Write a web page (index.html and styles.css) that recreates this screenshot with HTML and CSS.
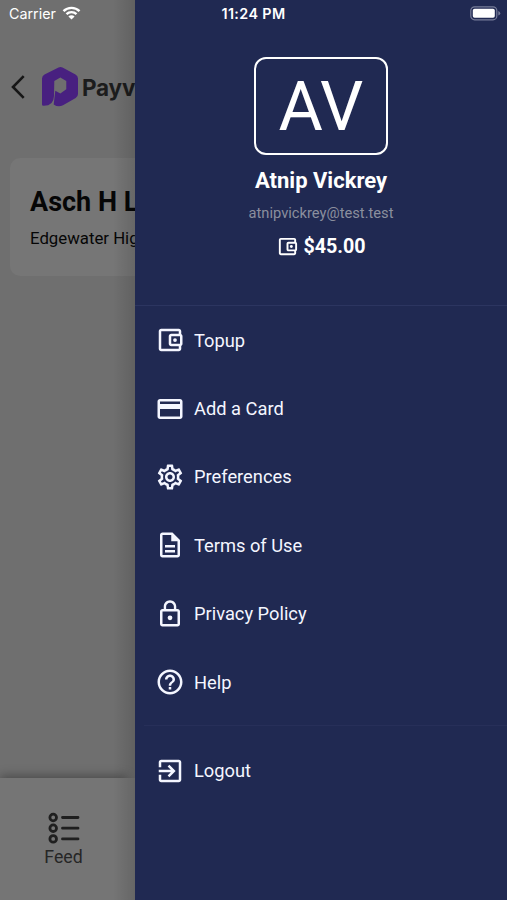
FILE: index.html
```
<!DOCTYPE html>
<html lang="en">
<head>
<meta charset="UTF-8">
<title>Payv</title>
<link rel="stylesheet" href="styles.css">
</head>
<body>
<div class="screen">

  <!-- Page behind the drawer -->
  <div class="page">
    <header class="header">
      <svg class="back" viewBox="0 0 14 24"><path d="M12.700 1.200 2 12l10.700 10.800"/></svg>
      <svg class="logo" viewBox="0 0 36 40"><path d="M16.500.6q2-1 4 0l13 6.900q2.500 1.300 2.500 4V27q0 2.500-2.300 3.900L21 38.300q-5 2.500-9.300-.9L13.300 23.800l5 2.700 6-4.200V14l-6-3.500-6 3.500-.3 15q-.3 10-10.500 9.800Q0 38.800 0 37.500V11.500q0-2.700 2.500-4z"/></svg>
      <span class="brand">Payv</span>
    </header>
    <div class="card">
      <h2>Asch H L</h2>
      <p>Edgewater High</p>
    </div>
    <footer class="tabbar">
      <svg class="feed" viewBox="0 0 32 32">
        <circle cx="5.200" cy="5.500" r="3.300"/><circle cx="5.200" cy="16.200" r="3.300"/><circle cx="5.200" cy="26.900" r="3.300"/>
        <path d="M14.500 5.500h15.500M14.500 16.200h15.500M14.500 26.900h15.500"/>
      </svg>
      <span>Feed</span>
    </footer>
  </div>

  <!-- Drawer -->
  <aside class="drawer">
    <div class="profile">
      <div class="avatar">AV</div>
      <h1>Atnip Vickrey</h1>
      <p class="email">atnipvickrey@test.test</p>
      <div class="balance">
        <svg viewBox="0 0 24 24"><path d="M21 7.280V5c0-1.100-.9-2-2-2H5c-1.110 0-2 .9-2 2v14c0 1.100.89 2 2 2h14c1.100 0 2-.9 2-2v-2.280c.59-.35 1-.98 1-1.720V9c0-.74-.41-1.370-1-1.720zM20 9v6h-7V9h7zM5 19V5h14v2h-6c-1.100 0-2 .9-2 2v6c0 1.100.9 2 2 2h6v2H5z"/><circle cx="16" cy="12" r="1.500"/></svg>
        <span>$45.00</span>
      </div>
    </div>

    <nav class="menu">
      <a class="item">
        <svg viewBox="0 0 24 24"><path d="M21 7.280V5c0-1.100-.9-2-2-2H5c-1.110 0-2 .9-2 2v14c0 1.100.89 2 2 2h14c1.100 0 2-.9 2-2v-2.280c.59-.35 1-.98 1-1.720V9c0-.74-.41-1.370-1-1.720zM20 9v6h-7V9h7zM5 19V5h14v2h-6c-1.100 0-2 .9-2 2v6c0 1.100.9 2 2 2h6v2H5z"/><circle cx="16" cy="12" r="1.500"/></svg>
        <span>Topup</span>
      </a>
      <a class="item">
        <svg viewBox="0 0 24 24"><path d="M20 4H4c-1.110 0-1.990.89-1.990 2L2 18c0 1.110.89 2 2 2h16c1.110 0 2-.89 2-2V6c0-1.110-.89-2-2-2zm0 14H4v-6h16v6zm0-10H4V6h16v2z"/></svg>
        <span>Add a Card</span>
      </a>
      <a class="item">
        <svg viewBox="0 0 24 24"><path d="M19.430 12.980c.04-.32.07-.64.07-.98 0-.34-.03-.66-.07-.98l2.110-1.650c.19-.15.24-.42.12-.64l-2-3.460c-.09-.16-.26-.25-.44-.25-.06 0-.12.01-.17.03l-2.490 1c-.52-.4-1.080-.73-1.690-.98l-.38-2.650C14.460 2.180 14.250 2 14 2h-4c-.25 0-.46.18-.49.42l-.38 2.650c-.61.25-1.170.59-1.690.98l-2.490-1c-.06-.02-.12-.03-.18-.03-.17 0-.34.09-.43.25l-2 3.460c-.13.22-.07.49.12.64l2.110 1.650c-.04.32-.07.65-.07.98 0 .33.03.66.07.98l-2.110 1.650c-.19.15-.24.42-.12.64l2 3.460c.09.16.26.25.44.25.06 0 .12-.01.17-.03l2.490-1c.52.4 1.080.73 1.690.98l.38 2.650c.03.24.24.42.49.42h4c.25 0 .46-.18.49-.42l.38-2.650c.61-.25 1.170-.59 1.690-.98l2.490 1c.06.02.12.03.18.03.17 0 .34-.09.43-.25l2-3.460c.12-.22.07-.49-.12-.64l-2.110-1.650zm-1.980-1.710c.04.31.05.52.05.73 0 .21-.02.43-.05.73l-.14 1.130.89.7 1.080.84-.7 1.210-1.270-.51-1.040-.42-.9.68c-.43.32-.84.56-1.250.73l-1.060.43-.16 1.130-.2 1.350h-1.400l-.19-1.350-.16-1.130-1.060-.43c-.43-.18-.83-.41-1.230-.71l-.91-.7-1.060.43-1.270.51-.7-1.210 1.080-.84.89-.7-.14-1.130c-.03-.31-.05-.54-.05-.74s.02-.43.05-.73l.14-1.130-.89-.7-1.080-.84.7-1.210 1.270.51 1.040.42.9-.68c.43-.32.84-.56 1.250-.73l1.060-.43.16-1.130.2-1.350h1.390l.19 1.350.16 1.130 1.060.43c.43.18.83.41 1.230.71l.91.7 1.060-.43 1.270-.51.7 1.210-1.070.85-.89.7.14 1.130zM12 8c-2.210 0-4 1.790-4 4s1.790 4 4 4 4-1.790 4-4-1.790-4-4-4zm0 6c-1.100 0-2-.9-2-2s.9-2 2-2 2 .9 2 2-.9 2-2 2z"/></svg>
        <span>Preferences</span>
      </a>
      <a class="item">
        <svg viewBox="0 0 24 24"><path d="M8 16h8v2H8zm0-4h8v2H8zm6-10H6c-1.100 0-2 .9-2 2v16c0 1.100.89 2 1.990 2H18c1.100 0 2-.9 2-2V8l-6-6zm4 18H6V4h7v5h5v11z"/></svg>
        <span>Terms of Use</span>
      </a>
      <a class="item">
        <svg viewBox="0 0 24 24"><path d="M18 8h-1V6c0-2.760-2.240-5-5-5S7 3.240 7 6v2H6c-1.100 0-2 .9-2 2v10c0 1.100.9 2 2 2h12c1.100 0 2-.9 2-2V10c0-1.100-.9-2-2-2zM8.900 6c0-1.710 1.390-3.100 3.100-3.100s3.100 1.390 3.100 3.100v2H8.900V6zM18 20H6V10h12v10z"/><circle cx="12" cy="15" r="1.900"/></svg>
        <span>Privacy Policy</span>
      </a>
      <a class="item">
        <svg viewBox="0 0 24 24"><path d="M11 18h2v-2h-2v2zm1-16C6.480 2 2 6.480 2 12s4.480 10 10 10 10-4.480 10-10S17.520 2 12 2zm0 18c-4.410 0-8-3.590-8-8s3.590-8 8-8 8 3.590 8 8-3.590 8-8 8zm0-14c-2.210 0-4 1.790-4 4h2c0-1.100.9-2 2-2s2 .9 2 2c0 2-3 1.750-3 5h2c0-2.250 3-2.500 3-5 0-2.210-1.790-4-4-4z"/></svg>
        <span>Help</span>
      </a>
    </nav>

    <div class="menu logout">
      <a class="item">
        <svg viewBox="0 0 24 24"><path d="M10.090 15.590L11.500 17l5-5-5-5-1.410 1.410L12.670 11H3v2h9.670l-2.580 2.590zM19 3H5c-1.110 0-2 .9-2 2v4h2V5h14v14H5v-4H3v4c0 1.100.89 2 2 2h14c1.100 0 2-.9 2-2V5c0-1.100-.9-2-2-2z"/></svg>
        <span>Logout</span>
      </a>
    </div>
  </aside>

  <!-- iOS status bar -->
  <div class="status">
    <div class="carrier">
      <span>Carrier</span>
      <svg class="wifi" viewBox="0 0 18 14"><path d="M1 5.200a11.300 11.300 0 0 1 16 0M4 8.200a7.100 7.100 0 0 1 10 0"/><path class="dot" d="M9 13.600 5.900 10.500a4.400 4.400 0 0 1 6.200 0z"/></svg>
    </div>
    <span class="time">11:24 PM</span>
    <svg class="battery" viewBox="0 0 31 15"><rect class="shell" x=".8" y=".8" width="26" height="13" rx="3.800"/><rect x="2.800" y="2.800" width="22" height="9" rx="1.800"/><path class="cap" d="M28.300 5v4.600q1.900-.7 1.900-2.300T28.300 5z"/></svg>
  </div>
</div>
</body>
</html>
```
FILE: styles.css
```
*{box-sizing:border-box;}
body{margin:0;font-family:Roboto, "Liberation Sans", sans-serif;}
h1,h2,p{margin:0;}
.screen{position:relative;display:flex;width:507px;height:900px;overflow:hidden;background:#6f6f6f;}

/* Page behind the drawer */
.page{position:relative;display:flex;flex-direction:column;width:135px;flex:none;overflow:hidden;white-space:nowrap;}
.page::after{content:"";position:absolute;top:0;right:0;bottom:0;width:22px;background:linear-gradient(to right,rgba(0,0,0,0),rgba(0,0,0,.13));}
.header{display:flex;align-items:center;height:40px;margin-top:67px;padding-left:10.500px;}
.back{flex:none;width:14px;height:24px;fill:none;stroke:#161616;stroke-width:2.6;}
.logo{flex:none;width:36px;height:40px;margin-left:17.500px;fill:#482080;}
.brand{margin-left:4px;font-family:Inter, sans-serif;font-size:22.500px;font-weight:700;letter-spacing:-.2px;color:#1c1c1c;}
.card{width:486px;height:118px;margin:51px 0 0 10px;padding:28px 20px;border-radius:10px;background:#767676;color:#060606;}
.card h2{font-size:27px;line-height:32px;font-weight:700;}
.card p{margin-top:9px;font-size:16.800px;line-height:22px;}
.tabbar{display:flex;flex-direction:column;align-items:center;width:127px;height:122px;margin-top:auto;padding-top:34px;background:#757575;box-shadow:8px 0 0 #757575,0 -2px 10px rgba(0,0,0,.35);font-size:17.700px;line-height:20px;color:#262626;}
.feed{width:32px;height:32px;margin-bottom:3px;fill:none;stroke:#1f1f1f;stroke-width:2.8;stroke-linecap:round;}

/* Drawer */
.drawer{flex:1;display:flex;flex-direction:column;background:#202952;color:#fff;}
.profile{display:flex;flex-direction:column;align-items:center;height:306px;padding-top:57px;border-bottom:1px solid #2c3560;}
.avatar{width:134px;height:98px;border:2.500px solid #fff;border-radius:12px;font-size:68px;line-height:96px;text-align:center;}
.profile h1{margin-top:12px;font-size:22px;line-height:28px;font-weight:700;}
.email{margin-top:9px;font-size:14.700px;line-height:18px;color:#8b8f9e;}
.balance{display:flex;align-items:center;gap:4px;margin-top:13px;font-size:19.700px;line-height:24px;font-weight:700;}
.balance svg{width:23px;height:23px;margin-top:-2px;fill:#fff;}
.menu{display:flex;flex-direction:column;}
.item{display:flex;align-items:center;gap:9.500px;height:68.400px;padding-left:19.500px;font-size:18.300px;color:#f4f6ff;}
.item svg{width:30px;height:30px;fill:#f4f6ff;}
.logout{margin:9px 0 0 9px;padding-top:10px;border-top:1px solid #272f59;}
.logout .item{padding-left:10.500px;}

/* Status bar */
.status{position:absolute;top:0;left:0;right:0;display:grid;grid-template-columns:1fr auto 1fr;align-items:center;height:27px;padding:0 6px 0 9px;font-family:Inter, sans-serif;font-size:14.300px;color:#fff;}
.carrier{display:flex;align-items:center;gap:6px;}
.wifi{width:19px;height:14px;margin-top:-2px;fill:none;stroke:#fff;stroke-width:2.4;}
.wifi .dot{fill:#fff;stroke:none;}
.time{margin-right:3px;font-weight:600;letter-spacing:.4px;}
.battery{width:31px;height:15px;justify-self:end;fill:#fff;}
.battery .shell{fill:none;stroke:#777d99;stroke-width:1.2;}
.battery .cap{fill:#777d99;}
```
